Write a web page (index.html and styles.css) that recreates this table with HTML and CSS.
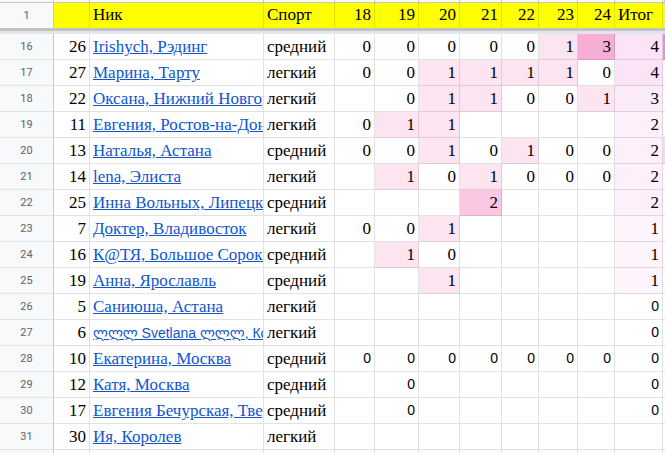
FILE: index.html
```html
<!DOCTYPE html>
<html>
<head>
<meta charset="utf-8">
<link rel="stylesheet" href="styles.css">
</head>
<body>
<div class="sheet">
  <div class="row colhead">
    <div class="c"></div><div class="c"></div><div class="c"></div><div class="c"></div><div class="c"></div><div class="c"></div><div class="c"></div><div class="c"></div><div class="c"></div><div class="c"></div><div class="c"></div><div class="c"></div><div class="c"></div>
  </div>
  <div class="row head">
    <div class="c rh">1</div>
    <div class="c y"></div>
    <div class="c y">Ник</div>
    <div class="c y">Спорт</div>
    <div class="c y r">18</div>
    <div class="c y r">19</div>
    <div class="c y r">20</div>
    <div class="c y r">21</div>
    <div class="c y r">22</div>
    <div class="c y r">23</div>
    <div class="c y r">24</div>
    <div class="c y">Итог</div>
    <div class="c y"></div>
  </div>
  <div class="freeze"><div class="fz-dark"></div><div class="fz-light"></div></div>

  <div class="row">
    <div class="c rh">16</div><div class="c r">26</div><div class="c"><span class="lnk">Irishych, Рэдинг</span></div><div class="c">средний</div>
    <div class="c r">0</div><div class="c r">0</div><div class="c r">0</div><div class="c r">0</div><div class="c r">0</div><div class="c r p1">1</div><div class="c r p3">3</div><div class="c r t4">4</div><div class="c lx1"></div>
  </div>
  <div class="row">
    <div class="c rh">17</div><div class="c r">27</div><div class="c"><span class="lnk">Марина, Тарту</span></div><div class="c">легкий</div>
    <div class="c r">0</div><div class="c r">0</div><div class="c r p1">1</div><div class="c r p1">1</div><div class="c r p1">1</div><div class="c r p1">1</div><div class="c r">0</div><div class="c r t4">4</div><div class="c"></div>
  </div>
  <div class="row">
    <div class="c rh">18</div><div class="c r">22</div><div class="c"><span class="lnk">Оксана, Нижний Новгород</span></div><div class="c">легкий</div>
    <div class="c r"></div><div class="c r">0</div><div class="c r p1">1</div><div class="c r p1">1</div><div class="c r">0</div><div class="c r">0</div><div class="c r p1">1</div><div class="c r t3">3</div><div class="c"></div>
  </div>
  <div class="row">
    <div class="c rh">19</div><div class="c r">11</div><div class="c"><span class="lnk">Евгения, Ростов-на-Дону</span></div><div class="c">легкий</div>
    <div class="c r">0</div><div class="c r p1">1</div><div class="c r p1">1</div><div class="c r"></div><div class="c r"></div><div class="c r"></div><div class="c r"></div><div class="c r t2">2</div><div class="c"></div>
  </div>
  <div class="row">
    <div class="c rh">20</div><div class="c r">13</div><div class="c"><span class="lnk">Наталья, Астана</span></div><div class="c">средний</div>
    <div class="c r">0</div><div class="c r">0</div><div class="c r p1">1</div><div class="c r">0</div><div class="c r p1">1</div><div class="c r">0</div><div class="c r">0</div><div class="c r t2">2</div><div class="c lx2"></div>
  </div>
  <div class="row">
    <div class="c rh">21</div><div class="c r">14</div><div class="c"><span class="lnk">lena, Элиста</span></div><div class="c">легкий</div>
    <div class="c r"></div><div class="c r p1">1</div><div class="c r">0</div><div class="c r p1">1</div><div class="c r">0</div><div class="c r">0</div><div class="c r">0</div><div class="c r t2">2</div><div class="c"></div>
  </div>
  <div class="row">
    <div class="c rh">22</div><div class="c r">25</div><div class="c"><span class="lnk">Инна Вольных, Липецк</span></div><div class="c">средний</div>
    <div class="c r"></div><div class="c r"></div><div class="c r"></div><div class="c r p2">2</div><div class="c r"></div><div class="c r"></div><div class="c r"></div><div class="c r t2">2</div><div class="c"></div>
  </div>
  <div class="row">
    <div class="c rh">23</div><div class="c r">7</div><div class="c"><span class="lnk">Доктер, Владивосток</span></div><div class="c">легкий</div>
    <div class="c r">0</div><div class="c r">0</div><div class="c r p1">1</div><div class="c r"></div><div class="c r"></div><div class="c r"></div><div class="c r"></div><div class="c r t1">1</div><div class="c"></div>
  </div>
  <div class="row">
    <div class="c rh">24</div><div class="c r">16</div><div class="c"><span class="lnk">К@ТЯ, Большое Сорокино</span></div><div class="c">средний</div>
    <div class="c r"></div><div class="c r p1">1</div><div class="c r">0</div><div class="c r"></div><div class="c r"></div><div class="c r"></div><div class="c r"></div><div class="c r t1">1</div><div class="c"></div>
  </div>
  <div class="row">
    <div class="c rh">25</div><div class="c r">19</div><div class="c"><span class="lnk">Анна, Ярославль</span></div><div class="c">средний</div>
    <div class="c r"></div><div class="c r"></div><div class="c r p1">1</div><div class="c r"></div><div class="c r"></div><div class="c r"></div><div class="c r"></div><div class="c r t1">1</div><div class="c"></div>
  </div>
  <div class="row">
    <div class="c rh">26</div><div class="c r">5</div><div class="c"><span class="lnk">Саниюша, Астана</span></div><div class="c">легкий</div>
    <div class="c r"></div><div class="c r"></div><div class="c r"></div><div class="c r"></div><div class="c r"></div><div class="c r"></div><div class="c r"></div><div class="c r sans">0</div><div class="c"></div>
  </div>
  <div class="row">
    <div class="c rh">27</div><div class="c r">6</div><div class="c"><span class="lnk sansname">ლლლ Svetlana ლლლ, Кобрин</span></div><div class="c">легкий</div>
    <div class="c r"></div><div class="c r"></div><div class="c r"></div><div class="c r"></div><div class="c r"></div><div class="c r"></div><div class="c r"></div><div class="c r sans">0</div><div class="c"></div>
  </div>
  <div class="row">
    <div class="c rh">28</div><div class="c r">10</div><div class="c"><span class="lnk">Екатерина, Москва</span></div><div class="c">средний</div>
    <div class="c r sans">0</div><div class="c r sans">0</div><div class="c r sans">0</div><div class="c r sans">0</div><div class="c r sans">0</div><div class="c r sans">0</div><div class="c r sans">0</div><div class="c r sans">0</div><div class="c"></div>
  </div>
  <div class="row">
    <div class="c rh">29</div><div class="c r">12</div><div class="c"><span class="lnk">Катя, Москва</span></div><div class="c">средний</div>
    <div class="c r"></div><div class="c r sans">0</div><div class="c r"></div><div class="c r"></div><div class="c r"></div><div class="c r"></div><div class="c r"></div><div class="c r sans">0</div><div class="c"></div>
  </div>
  <div class="row">
    <div class="c rh">30</div><div class="c r">17</div><div class="c"><span class="lnk">Евгения Бечурская, Тверь</span></div><div class="c">средний</div>
    <div class="c r"></div><div class="c r sans">0</div><div class="c r"></div><div class="c r"></div><div class="c r"></div><div class="c r"></div><div class="c r"></div><div class="c r sans">0</div><div class="c"></div>
  </div>
  <div class="row">
    <div class="c rh">31</div><div class="c r">30</div><div class="c"><span class="lnk">Ия, Королев</span></div><div class="c">легкий</div>
    <div class="c r"></div><div class="c r"></div><div class="c r"></div><div class="c r"></div><div class="c r"></div><div class="c r"></div><div class="c r"></div><div class="c r"></div><div class="c"></div>
  </div>
  <div class="row tail">
    <div class="c rh"></div><div class="c"></div><div class="c"></div><div class="c"></div><div class="c"></div><div class="c"></div><div class="c"></div><div class="c"></div><div class="c"></div><div class="c"></div><div class="c"></div><div class="c"></div><div class="c"></div>
  </div>
</div>
</body>
</html>
```
FILE: styles.css
```css
html, body {
  margin: 0;
  padding: 0;
  background: #ffffff;
}
body {
  width: 665px;
  height: 453px;
  overflow: hidden;
  font-family: "Liberation Serif", "Times New Roman", serif;
  font-size: 17px;
  color: #000000;
}
.sheet {
  display: flex;
  flex-direction: column;
  width: 665px;
  height: 453px;
  overflow: hidden;
}
.row {
  display: grid;
  grid-template-columns: 54px 36px 174px 71px 40px 44px 41px 42px 37px 39px 37px 48px 1fr;
  width: 665px;
  height: 26px;
  flex: none;
}
.c {
  box-sizing: border-box;
  border-right: 1px solid rgba(0, 0, 0, 0.115);
  border-bottom: 1px solid rgba(0, 0, 0, 0.115);
  padding: 0 3px 0 3px;
  line-height: 25px;
  white-space: nowrap;
  overflow: hidden;
}
.r {
  text-align: right;
}
.rh {
  background: #f8f9fa;
  border-right: 1px solid #c4c7c5;
  border-bottom: 1px solid #e1e3e1;
  font-family: Roboto, "Liberation Sans", sans-serif;
  font-size: 11px;
  color: #5f6368;
  text-align: center;
  padding: 0;
  line-height: 25px;
}
.colhead {
  height: 3px;
}
.colhead .c {
  background: #f8f9fa;
  border-right: 1px solid #c4c7c5;
  border-bottom: 1px solid #c4c7c5;
  padding: 0;
  line-height: 2px;
}
.head {
  height: 25px;
}
.head .c {
  border-bottom: none;
  line-height: 24px;
}
.head .rh {
  line-height: 25px;
}
.tail {
  height: 4px;
}
.y {
  background: #ffff00;
}
.freeze {
  display: flex;
  flex-direction: column;
  flex: none;
}
.fz-dark {
  height: 3px;
  background: #c0c2c4;
}
.fz-light {
  height: 3px;
  background: #e3e5e8;
}
.lnk {
  color: #1155cc;
  text-decoration: underline;
}
.sans {
  font-family: "Liberation Sans", Arial, sans-serif;
  font-size: 14px;
}
.sansname {
  font-family: "Liberation Sans", "DejaVu Sans", sans-serif;
  font-size: 14px;
}
.p1 {
  background: #fce4f1;
}
.p2 {
  background: #fac8e3;
}
.p3 {
  background: #f7aed6;
}
.t4 {
  background: #fbe4f8;
}
.t3 {
  background: #fcebf9;
}
.t2 {
  background: #fdf0fb;
}
.t1 {
  background: #fef5fc;
}
.lx1 {
  background: #e48be4;
}
.lx2 {
  background: #f7d8f1;
}
```
